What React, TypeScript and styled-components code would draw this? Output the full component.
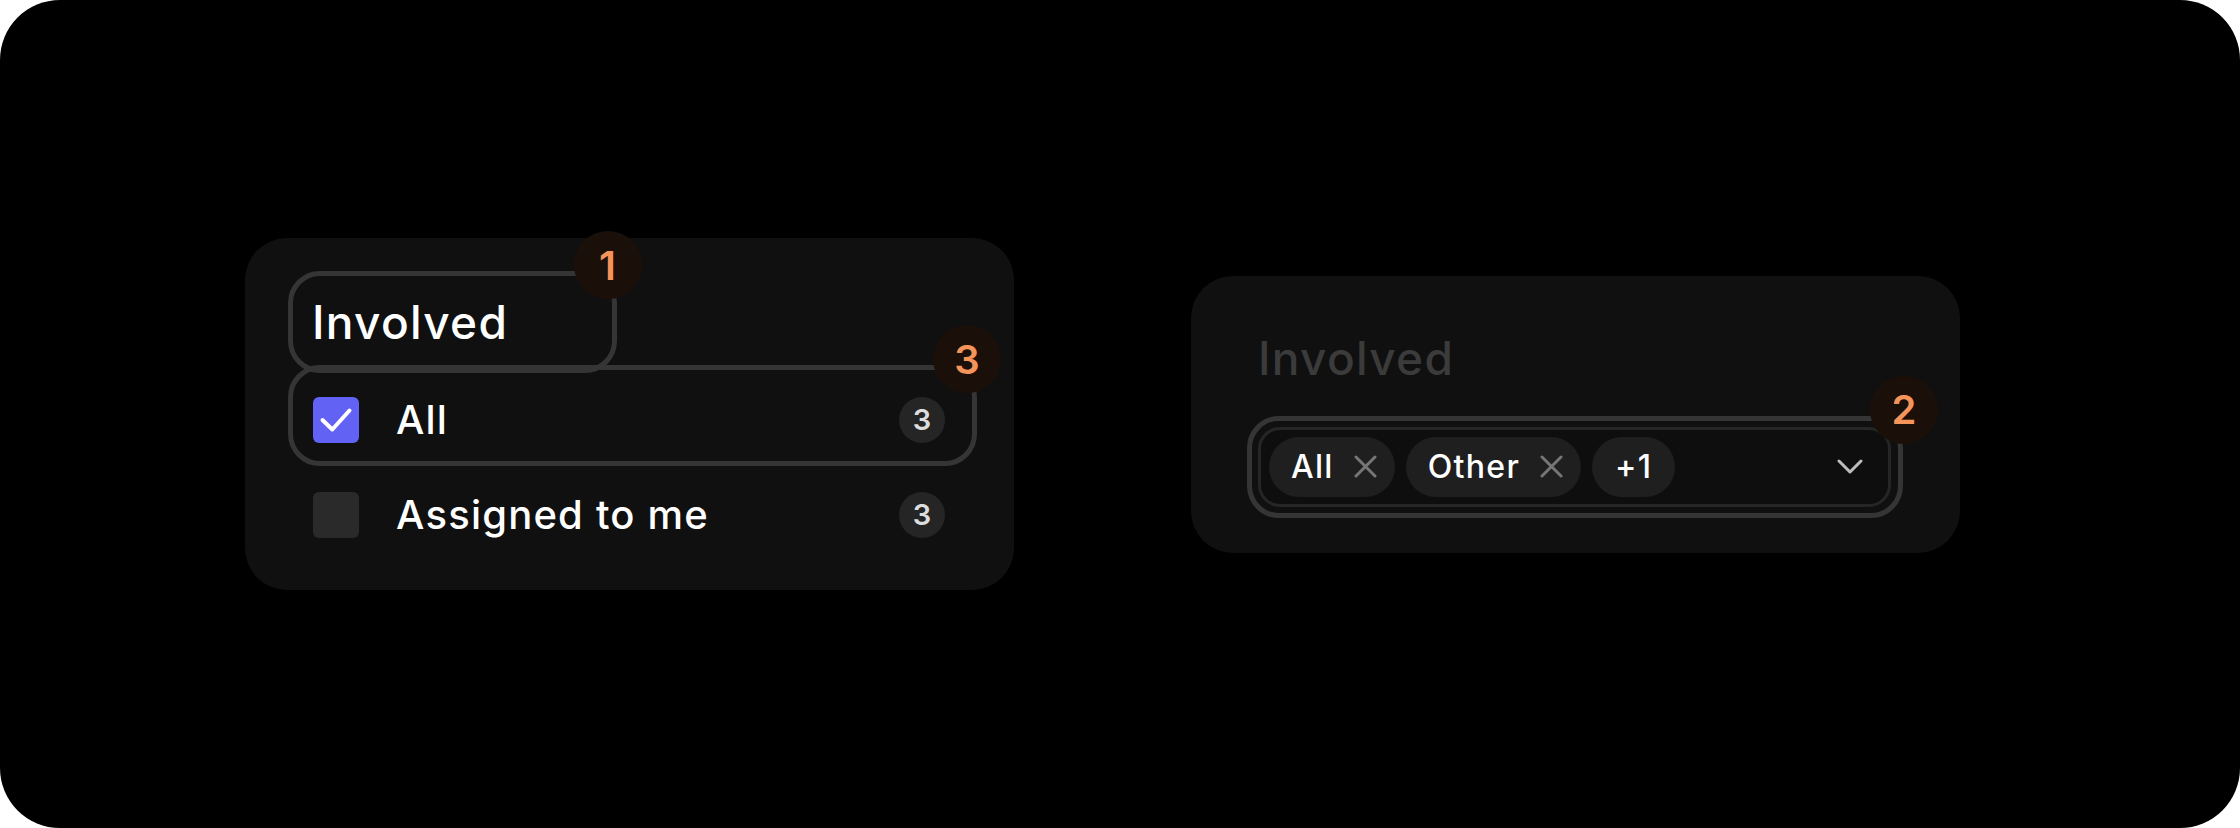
import React from 'react';
import styled, { createGlobalStyle } from 'styled-components';

const Global = createGlobalStyle`
  html, body { margin: 0; padding: 0; background: #ffffff; }
  body { font-family: Inter, "Noto Sans", sans-serif; -webkit-font-smoothing: antialiased; }
  * { box-sizing: border-box; }
`;

const Frame = styled.div`
  width: 2240px;
  height: 828px;
  background: #000;
  border-radius: 60px;
  display: flex;
  align-items: center;
  padding-left: 245px;
  gap: 177px;
`;

const Card = styled.div<{ $h: number; $pad: string }>`
  position: relative;
  width: 769px;
  height: ${p => p.$h}px;
  padding: ${p => p.$pad};
  background: #101010;
  border-radius: 42px;
  display: flex;
  flex-direction: column;
  align-items: flex-start;
`;

const Annotation = styled.div<{ $inset: string; $r?: number }>`
  position: absolute;
  inset: ${p => p.$inset};
  border: 5px solid #353535;
  border-radius: ${p => p.$r ?? 32}px;
  pointer-events: none;
`;

const Marker = styled.div<{ $left: number; $top: number }>`
  position: absolute;
  left: ${p => p.$left}px;
  top: ${p => p.$top}px;
  width: 68px;
  height: 68px;
  border-radius: 50%;
  background: #1b0f09;
  color: #f4945a;
  font-size: 40px;
  font-weight: 600;
  display: flex;
  align-items: center;
  justify-content: center;
  z-index: 2;
`;

const Title = styled.div`
  position: relative;
  width: 329px;
  height: 101px;
  display: flex;
  align-items: center;
  padding-left: 24px;
  font-size: 46px;
  font-weight: 500;
  color: #ffffff;
  letter-spacing: 1.3px;
`;

const Row = styled.div`
  position: relative;
  width: 689px;
  height: 95px;
  display: flex;
  align-items: center;
  padding: 0 32px 0 25px;
`;

const Box = styled.div<{ $checked?: boolean }>`
  width: 46px;
  height: 46px;
  border-radius: 6px;
  background: ${p => (p.$checked ? '#6262f4' : '#2a2a2a')};
  display: flex;
  align-items: center;
  justify-content: center;
  flex-shrink: 0;
`;

const RowLabel = styled.span`
  margin-left: 37px;
  font-size: 40px;
  font-weight: 500;
  color: #ffffff;
  letter-spacing: 1.2px;
`;

const Count = styled.span`
  margin-left: auto;
  width: 46px;
  height: 46px;
  border-radius: 50%;
  background: #252525;
  color: #dddddd;
  font-size: 29px;
  font-weight: 600;
  display: flex;
  align-items: center;
  justify-content: center;
`;

const FieldLabel = styled.div`
  height: 57px;
  line-height: 57px;
  font-size: 46px;
  font-weight: 500;
  color: #3b3b3b;
  letter-spacing: 1.3px;
`;

const Select = styled.div`
  position: relative;
  margin-top: 40px;
  width: 633px;
  height: 80px;
  border: 3px solid #262626;
  border-radius: 22px;
  background: #0e0e0e;
  display: flex;
  align-items: center;
  gap: 11px;
  padding: 0 25px 0 8px;
`;

const Chip = styled.div<{ $plain?: boolean }>`
  height: 60px;
  border-radius: 30px;
  background: #1f1f1f;
  display: flex;
  align-items: center;
  gap: 20px;
  padding: ${p => (p.$plain ? '0 23px' : '0 18px 0 22px')};
  font-size: 32px;
  font-weight: 500;
  color: #ffffff;
  letter-spacing: 1.3px;
`;

const Chevron = styled.svg`
  margin-left: auto;
`;

const Check = () => (
  <svg width="46" height="46" viewBox="0 0 46 46">
    <path d="M9.5 23 L19.3 32.5 L36.5 13.5" fill="none" stroke="#fff" strokeWidth="4" strokeLinecap="round" strokeLinejoin="round" />
  </svg>
);

const Cross = () => (
  <svg width="23" height="23" viewBox="0 0 23 23">
    <path d="M2 2 L21 21 M21 2 L2 21" stroke="#767676" strokeWidth="3" strokeLinecap="round" />
  </svg>
);

export default function App() {
  return (
    <>
      <Global />
      <Frame>
        <Card $h={352} $pad="33px 37px 0 43px">
          <Title>
            Involved
            <Annotation $inset="0 0 -1px 0" />
            <Marker $left={286} $top={-40}>1</Marker>
          </Title>
          <Row>
            <Box $checked>
              <Check />
            </Box>
            <RowLabel>All</RowLabel>
            <Count>3</Count>
            <Annotation $inset="-7px 0 1px 0" />
            <Marker $left={645} $top={-47}>3</Marker>
          </Row>
          <Row>
            <Box />
            <RowLabel>Assigned to me</RowLabel>
            <Count>3</Count>
          </Row>
        </Card>
        <Card $h={277} $pad="54px 69px 0 67px">
          <FieldLabel>Involved</FieldLabel>
          <Select>
            <Chip>
              All
              <Cross />
            </Chip>
            <Chip>
              Other
              <Cross />
            </Chip>
            <Chip $plain>+1</Chip>
            <Chevron width="26" height="15" viewBox="0 0 26 15">
              <path d="M2 2 L13 13 L24 2" fill="none" stroke="#bdbdbd" strokeWidth="3" strokeLinecap="round" strokeLinejoin="round" />
            </Chevron>
            <Annotation $inset="-14px -15px -14px -14px" />
            <Marker $left={609} $top={-54}>2</Marker>
          </Select>
        </Card>
      </Frame>
    </>
  );
}
